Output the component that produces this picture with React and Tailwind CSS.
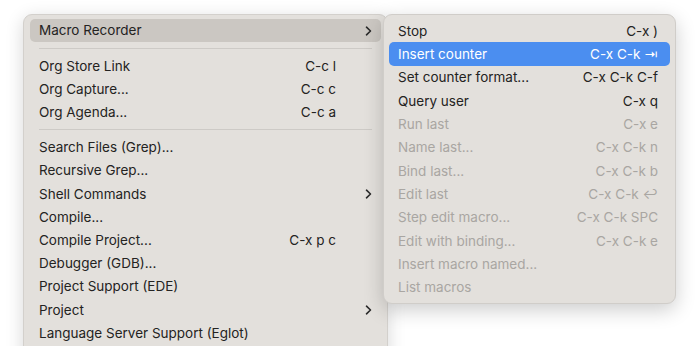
import React from "react";

const font = { fontFamily: "Inter, 'Noto Sans', 'DejaVu Sans', sans-serif" };

function Chevron() {
  return (
    <svg width="7" height="10" viewBox="0 0 7 10" className="block">
      <path d="M1.5 1.2 L5.5 5 L1.5 8.8" fill="none" stroke="#2a2a2a" strokeWidth="1.6" strokeLinecap="round" strokeLinejoin="round" />
    </svg>
  );
}

function MainRow({ label, shortcut, sub, active }) {
  return (
    <div
      className={
        "mx-[6px] h-[23.2px] rounded-[5px] pl-[9px] pr-[9px] flex items-center text-[13.5px] text-[#242322] " +
        (active ? "bg-[#cbc7c2]" : "")
      }
    >
      <span className="flex-1 whitespace-nowrap">{label}</span>
      <span className="whitespace-nowrap">{shortcut}</span>
      <div className="w-[36px] flex justify-end">{sub ? <Chevron /> : null}</div>
    </div>
  );
}

function Sep() {
  return (
    <div className="h-[12px] flex items-center px-[15px]">
      <div className="h-px w-full bg-[#cdcac6]" />
    </div>
  );
}

function SubRow({ label, shortcut, disabled, active }) {
  const color = active ? "text-white" : disabled ? "text-[#a9a6a2]" : "text-[#242322]";
  return (
    <div
      className={
        "mx-[5px] h-[23.35px] rounded-[5px] pl-[9px] pr-[12px] flex items-center text-[13.5px] " +
        color +
        (active ? " bg-[#4b8ef0]" : "")
      }
    >
      <span className="flex-1 whitespace-nowrap">{label}</span>
      <span className="whitespace-nowrap">{shortcut}</span>
    </div>
  );
}

export default function App() {
  return (
    <div className="w-[700px] h-[346px] bg-white overflow-hidden relative" style={font}>
      <div className="pt-[14px] pl-[23px]">
        <div className="w-[365px] h-[360px] rounded-[9px] bg-[#e3e0dc] border border-[#d3d0cc] shadow-[0_4px_18px_rgba(0,0,0,0.16)] pt-[4px]">
          <MainRow label="Macro Recorder" sub active />
          <Sep />
          <MainRow label="Org Store Link" shortcut="C-c l" />
          <MainRow label="Org Capture..." shortcut="C-c c" />
          <MainRow label="Org Agenda..." shortcut="C-c a" />
          <Sep />
          <MainRow label="Search Files (Grep)..." />
          <MainRow label="Recursive Grep..." />
          <MainRow label="Shell Commands" sub />
          <MainRow label="Compile..." />
          <MainRow label="Compile Project..." shortcut="C-x p c" />
          <MainRow label="Debugger (GDB)..." />
          <MainRow label="Project Support (EDE)" />
          <MainRow label="Project" sub />
          <MainRow label="Language Server Support (Eglot)" />
        </div>
      </div>
      <div className="absolute left-[383px] top-[14px] w-[293px] rounded-[9px] bg-[#e3e0dc] border border-[#d0cdc9] shadow-[0_6px_20px_rgba(0,0,0,0.2)] pt-[4px] pb-[4px]">
        <SubRow label="Stop" shortcut="C-x )" />
        <SubRow label="Insert counter" shortcut="C-x C-k ⇥" active />
        <SubRow label="Set counter format..." shortcut="C-x C-k C-f" />
        <SubRow label="Query user" shortcut="C-x q" />
        <SubRow label="Run last" shortcut="C-x e" disabled />
        <SubRow label="Name last..." shortcut="C-x C-k n" disabled />
        <SubRow label="Bind last..." shortcut="C-x C-k b" disabled />
        <SubRow label="Edit last" shortcut="C-x C-k ↩" disabled />
        <SubRow label="Step edit macro..." shortcut="C-x C-k SPC" disabled />
        <SubRow label="Edit with binding..." shortcut="C-x C-k e" disabled />
        <SubRow label="Insert macro named..." disabled />
        <SubRow label="List macros" disabled />
      </div>
    </div>
  );
}
